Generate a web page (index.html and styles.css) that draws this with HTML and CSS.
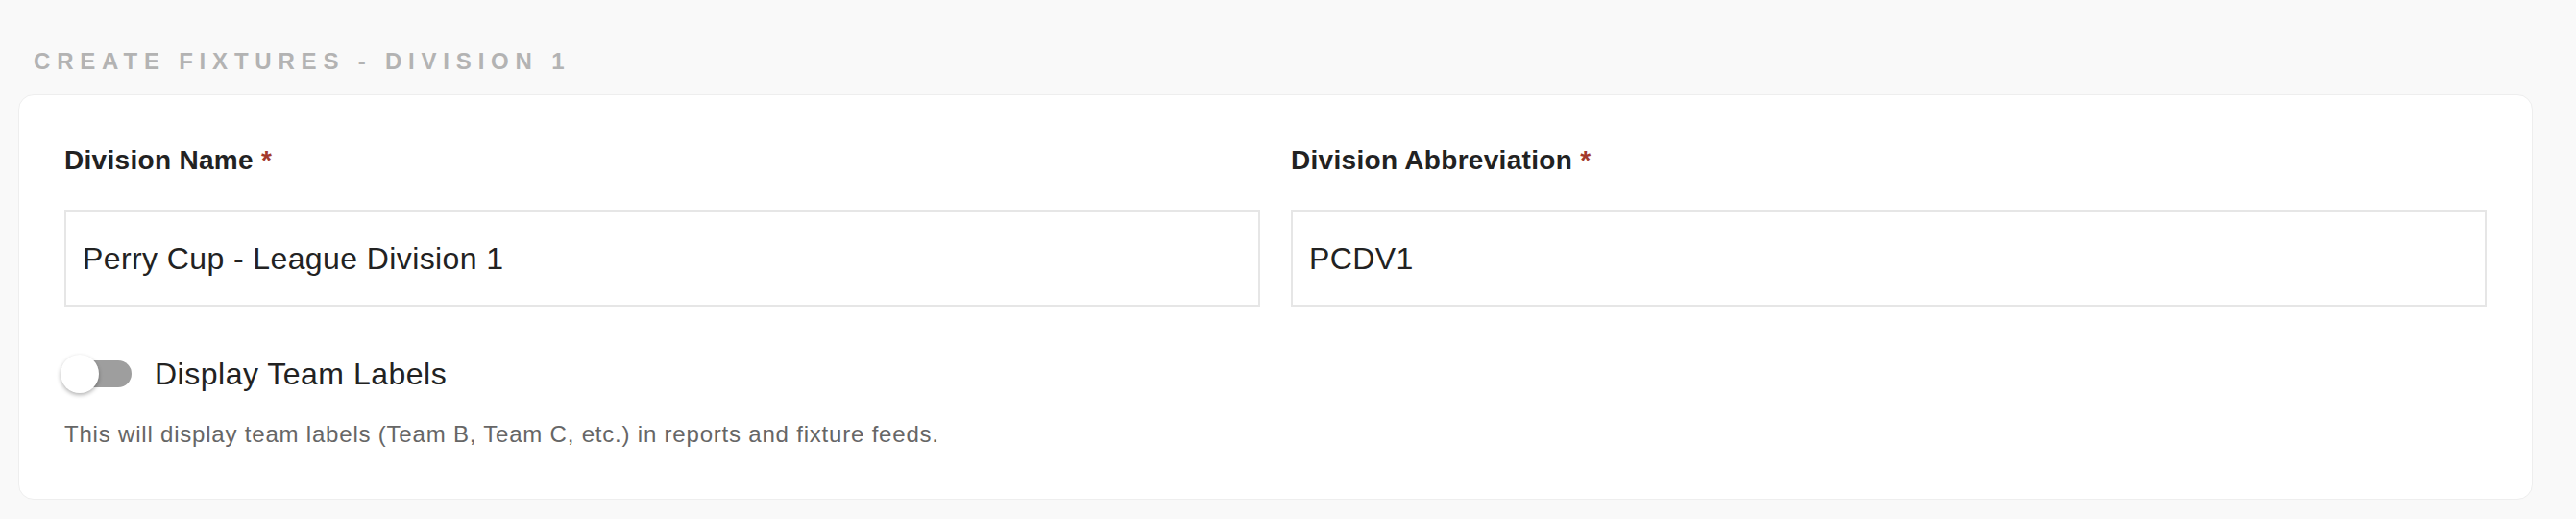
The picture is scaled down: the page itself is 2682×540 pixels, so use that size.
FILE: index.html
```html
<!DOCTYPE html>
<html lang="en">
<head>
    <meta charset="UTF-8">
    <meta name="viewport" content="width=device-width, initial-scale=1.0">
    <title>Create Fixtures</title>
    <link rel="stylesheet" href="styles.css">
</head>
<body>

    <div class="page">
        <h2 class="section-title">Create Fixtures - Division 1</h2>

        <div class="card">
            <div class="fields">
                <div class="field">
                    <label for="division-name">Division Name <span class="req">*</span></label>
                    <input type="text" id="division-name" value="Perry Cup - League Division 1" />
                </div>
                <div class="field">
                    <label for="division-abbr">Division Abbreviation <span class="req">*</span></label>
                    <input type="text" id="division-abbr" value="PCDV1" />
                </div>
            </div>

            <!-- Переключатель -->
            <label class="switch-row">
                <span class="switch"><span class="switch-thumb"></span></span>
                <span class="switch-text">Display Team Labels</span>
            </label>

            <p class="hint">This will display team labels (Team B, Team C, etc.) in reports and fixture feeds.</p>
        </div>
    </div>

</body>
</html>
```

FILE: styles.css
```css
* {
    box-sizing: border-box;
    margin: 0;
    padding: 0;
}

body {
    font-family: 'Liberation Sans', Arial, sans-serif;
    background-color: #f9f9f9;
    color: #222;
}

.page {
    padding: 49px 45px 20px 19px;
}

.section-title {
    font-size: 24px;
    line-height: 29px;
    font-weight: 700;
    color: #b3b3b3;
    text-transform: uppercase;
    letter-spacing: 6.8px;
    margin: 0 0 20px 16px;
}

.card {
    background-color: #ffffff;
    border: 1px solid #eeeeee;
    border-radius: 16px;
    padding: 51px 47px 50px 47px;
}

.fields {
    display: grid;
    grid-template-columns: 1fr 1fr;
    gap: 32px;
}

.field label {
    display: block;
    font-size: 28px;
    line-height: 34px;
    font-weight: 700;
    letter-spacing: 0.3px;
    color: #222;
    margin-bottom: 35px;
}

.req {
    color: #a3392b;
}

.field input {
    display: block;
    width: 100%;
    height: 100px;
    border: 2px solid #e6e6e6;
    border-radius: 0;
    padding: 0 17px;
    font-family: inherit;
    font-size: 32px;
    letter-spacing: 0.4px;
    color: #222;
    background-color: #fff;
    outline: none;
}

.switch-row {
    display: flex;
    align-items: center;
    height: 40px;
    margin-top: 50px;
    cursor: pointer;
}

.switch {
    position: relative;
    width: 74px;
    height: 28px;
    border-radius: 14px;
    background-color: #9e9e9e;
    margin-left: -4px;
}

.switch-thumb {
    position: absolute;
    left: 0;
    top: -6px;
    width: 40px;
    height: 40px;
    border-radius: 50%;
    background-color: #fff;
    box-shadow: 0 2px 4px rgba(0, 0, 0, 0.3);
}

.switch-text {
    font-size: 32px;
    letter-spacing: 0.5px;
    margin-left: 24px;
    color: #222;
}

.hint {
    font-size: 24px;
    line-height: 34px;
    letter-spacing: 0.8px;
    color: #666;
    margin-top: 26px;
}
```
